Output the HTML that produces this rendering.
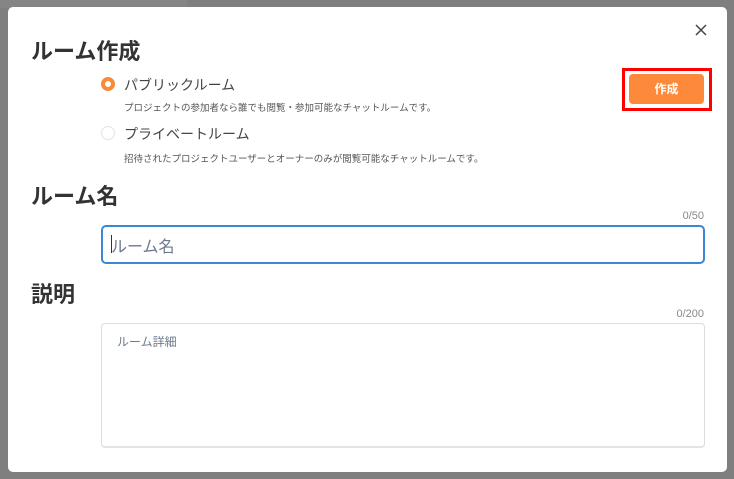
<!DOCTYPE html>
<html><head><meta charset="utf-8"><style>
*{margin:0;padding:0;box-sizing:border-box}
body{width:734px;height:479px;background:#7f7f7f;position:relative;overflow:hidden;font-family:"Liberation Sans","Noto Sans CJK JP",sans-serif;color:#333}
.top{position:absolute;left:0;top:0;width:187px;height:8px;background:#858585}
.modal{position:absolute;left:8px;top:7px;width:719px;height:465px;background:#fff;border-radius:5px}
.a{position:absolute;white-space:nowrap}
h{position:absolute;font-weight:bold;font-size:22px;color:#333;white-space:nowrap}
.lbl{font-size:14px;color:#444}
.desc{font-size:9.5px;color:#555}
.cnt{font-size:11px;color:#888}
.radio{position:absolute;width:14px;height:14px;border-radius:50%}
</style></head><body>
<div class="top"></div>
<div class="modal"></div>
<svg style="position:absolute;left:695px;top:24px" width="12" height="12" viewBox="0 0 12 12"><path d="M1 1L11 11M11 1L1 11" stroke="#444" stroke-width="1.5"/></svg>
<h style="left:31px;top:34px">ルーム作成</h>
<div class="radio" style="left:101px;top:77px;border:4px solid #f98a38"></div>
<div class="a lbl" style="left:124px;top:75px">パブリックルーム</div>
<div class="a desc" style="left:124px;top:100px">プロジェクトの参加者なら誰でも閲覧・参加可能なチャットルームです。</div>
<div class="radio" style="left:101px;top:126px;border:1.5px solid #dde3ee"></div>
<div class="a lbl" style="left:124px;top:124px">プライベートルーム</div>
<div class="a desc" style="left:124px;top:151px">招待されたプロジェクトユーザーとオーナーのみが閲覧可能なチャットルームです。</div>
<div style="position:absolute;left:622px;top:68px;width:90px;height:43px;border:3px solid #f00"></div>
<div style="position:absolute;left:629px;top:74px;width:75px;height:30px;background:#fd8a3a;border-radius:4px;color:#fff;font-weight:bold;font-size:12px;text-align:center;line-height:30px">作成</div>
<h style="left:31px;top:179px">ルーム名</h>
<div class="a cnt" style="right:30px;top:210px">0/50</div>
<div style="position:absolute;left:101px;top:225px;width:604px;height:39px;border:2px solid #3a87d5;border-radius:5px"></div>
<div class="a" style="left:111px;top:233px;font-size:16px;color:#6b7a8c">ルーム名</div>
<div style="position:absolute;left:111px;top:235px;width:1px;height:18px;background:#333"></div>
<h style="left:31px;top:277px">説明</h>
<div class="a cnt" style="right:30px;top:308px">0/200</div>
<div style="position:absolute;left:101px;top:323px;width:604px;height:125px;border:1px solid #ddd;border-bottom:2px solid #e4e4e4;border-radius:4px"></div>
<div class="a" style="left:117px;top:333px;font-size:12px;color:#6b7a8c">ルーム詳細</div>
</body></html>
